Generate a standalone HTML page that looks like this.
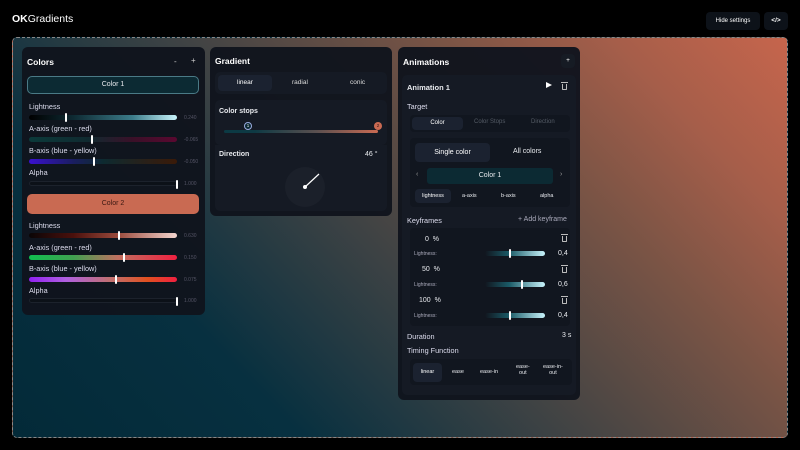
<!DOCTYPE html>
<html><head><meta charset="utf-8"><style>
*{box-sizing:border-box;margin:0;padding:0}
body{width:800px;height:450px;background:#000;font-family:"Liberation Sans",sans-serif;color:#e8eaee;position:relative;overflow:hidden;font-size:8px}
.a{position:absolute}
.stage{left:12px;top:37px;width:776px;height:401px;border:1px dashed #888;border-radius:5px;background:linear-gradient(46deg,#032a38 0%,#073040 25%,#404344 48%,#7a5445 70%,#a65e4a 85%,#c6654c 100%)}
.panel{background:rgba(16,20,29,.96);border-radius:6px}
.card{background:#151a24;border-radius:5px}
.t{font-weight:bold;font-size:8.5px;color:#fff}
.lbl{font-size:7.3px;color:#dde}
.track{height:5px;border-radius:3px}
.knob{width:2px;height:9px;background:#fff;top:-2px;border-radius:1px}
.val{font-size:5px;color:#556}
.btn{background:#1b2230;border-radius:4px;text-align:center;color:#fff;font-size:6.5px}
.trash{width:5px;height:6px;border:1px solid #bbb;border-top:none;border-radius:0 0 1px 1px}
.trash:before{content:"";position:absolute;left:-2px;top:-2px;width:7px;height:1px;background:#bbb}
</style></head><body>
<div class="a" style="left:12px;top:13px;font-size:10.5px;color:#fff"><b>OK</b>Gradients</div>
<div class="a btn" style="left:706px;top:12px;width:54px;height:18px;line-height:18px;background:#0d1219;font-size:6px">Hide settings</div>
<div class="a btn" style="left:764px;top:12px;width:24px;height:18px;line-height:18px;background:#0d1219;font-size:6.5px;font-weight:bold">&lt;/&gt;</div>
<div class="a stage"></div>

<!-- Colors -->
<div class="a panel" style="left:22px;top:47px;width:183px;height:268px">
 <div class="a t" style="left:5px;top:10px">Colors</div>
 <div class="a" style="left:152px;top:10px;color:#ccc">-</div>
 <div class="a" style="left:169px;top:9px;color:#ccc">+</div>
 <div class="a" style="left:5px;top:29px;width:172px;height:18px;border:1px solid #4a7a86;border-radius:5px;background:#0c2a33;text-align:center;line-height:16px;font-size:7px">Color 1</div>
 <div class="a lbl" style="left:7px;top:55px">Lightness</div>
 <div class="a track" style="left:7px;top:68px;width:148px;background:linear-gradient(90deg,#000,#0e2a33 30%,#3c7c8a 70%,#c8f4fc)"><div class="a knob" style="left:36px"></div></div>
 <div class="a val" style="left:162px;top:68px">0.240</div>
 <div class="a lbl" style="left:7px;top:77px">A-axis (green - red)</div>
 <div class="a track" style="left:7px;top:90px;width:148px;background:linear-gradient(90deg,#0b3a3a,#102a30 40%,#3a1028 70%,#5a0830)"><div class="a knob" style="left:62px"></div></div>
 <div class="a val" style="left:162px;top:90px">-0.065</div>
 <div class="a lbl" style="left:7px;top:99px">B-axis (blue - yellow)</div>
 <div class="a track" style="left:7px;top:112px;width:148px;background:linear-gradient(90deg,#3a10d0,#1a1e60 30%,#0d2a30 50%,#2a2018 80%,#3a1a08)"><div class="a knob" style="left:64px"></div></div>
 <div class="a val" style="left:162px;top:112px">-0.050</div>
 <div class="a lbl" style="left:7px;top:121px">Alpha</div>
 <div class="a track" style="left:7px;top:134px;width:148px;background:#0c1118;border:1px solid #1c222c"><div class="a knob" style="left:146px"></div></div>
 <div class="a val" style="left:162px;top:134px">1.000</div>
 <div class="a" style="left:5px;top:147px;width:172px;height:20px;border-radius:5px;background:#c96a52;text-align:center;line-height:20px;font-size:7px;color:#3a1812">Color 2</div>
 <div class="a lbl" style="left:7px;top:174px">Lightness</div>
 <div class="a track" style="left:7px;top:186px;width:148px;background:linear-gradient(90deg,#0a0506,#4a100c 30%,#9a4a3c 60%,#f4d6d0)"><div class="a knob" style="left:89px"></div></div>
 <div class="a val" style="left:162px;top:186px">0.630</div>
 <div class="a lbl" style="left:7px;top:196px">A-axis (green - red)</div>
 <div class="a track" style="left:7px;top:208px;width:148px;background:linear-gradient(90deg,#10c050,#40a050 30%,#c07060 60%,#f02040)"><div class="a knob" style="left:94px"></div></div>
 <div class="a val" style="left:162px;top:208px">0.150</div>
 <div class="a lbl" style="left:7px;top:217px">B-axis (blue - yellow)</div>
 <div class="a track" style="left:7px;top:230px;width:148px;background:linear-gradient(90deg,#9020f0,#b060e0 25%,#c07070 55%,#e05020 80%,#f02040)"><div class="a knob" style="left:86px"></div></div>
 <div class="a val" style="left:162px;top:230px">0.075</div>
 <div class="a lbl" style="left:7px;top:239px">Alpha</div>
 <div class="a track" style="left:7px;top:251px;width:148px;background:#0c1118;border:1px solid #1c222c"><div class="a knob" style="left:146px"></div></div>
 <div class="a val" style="left:162px;top:251px">1.000</div>
</div>

<!-- Gradient -->
<div class="a panel" style="left:210px;top:47px;width:182px;height:169px">
 <div class="a t" style="left:5px;top:9px">Gradient</div>
 <div class="a card" style="left:5px;top:25px;width:172px;height:22px">
  <div class="a btn" style="left:3px;top:3px;width:54px;height:16px;line-height:16px">linear</div>
  <div class="a" style="left:77px;top:7px;font-size:6.5px;color:#ddd">radial</div>
  <div class="a" style="left:135px;top:7px;font-size:6.5px;color:#ddd">conic</div>
 </div>
 <div class="a card" style="left:5px;top:53px;width:172px;height:45px">
  <div class="a" style="left:4px;top:8px;font-size:7px;font-weight:bold">Color stops</div>
  <div class="a" style="left:9px;top:30px;width:154px;height:3px;border-radius:2px;background:linear-gradient(90deg,#0b3a44,#0e3a44 20%,#5a5050 60%,#c96a52)"></div>
  <div class="a" style="left:29px;top:22px;width:8px;height:8px;border-radius:50%;border:1px solid #9ad;background:#0c2a33;font-size:4.5px;text-align:center;line-height:6px">1</div>
  <div class="a" style="left:159px;top:22px;width:8px;height:8px;border-radius:50%;background:#c96a52;font-size:4.5px;text-align:center;line-height:8px;color:#311">2</div>
 </div>
 <div class="a card" style="left:5px;top:98px;width:172px;height:66px;border-radius:0 0 5px 5px">
  <div class="a" style="left:4px;top:6px;font-size:7px;font-weight:bold">Direction</div>
  <div class="a" style="left:150px;top:6px;font-size:7px">46 °</div>
  <div class="a" style="left:70px;top:22px;width:40px;height:40px;border-radius:50%;background:#1b202a"></div>
  <svg class="a" style="left:70px;top:22px" width="40" height="40"><line x1="20" y1="20" x2="34" y2="7" stroke="#fff" stroke-width="1.2"/><circle cx="20" cy="20" r="2" fill="#fff"/></svg>
 </div>
</div>

<!-- Animations -->
<div class="a panel" style="left:398px;top:47px;width:182px;height:353px">
 <div class="a t" style="left:5px;top:10px">Animations</div>
 <div class="a btn" style="left:163px;top:7px;width:14px;height:14px;line-height:14px;background:#161b24">+</div>
 <div class="a card" style="left:4px;top:28px;width:174px;height:320px">
  <div class="a" style="left:5px;top:8px;font-size:7.5px;font-weight:bold">Animation 1</div>
  <div class="a" style="left:144px;top:7px;width:0;height:0;border-left:6px solid #fff;border-top:3.5px solid transparent;border-bottom:3.5px solid transparent"></div>
  <div class="a trash" style="left:160px;top:9px"></div>
  <div class="a lbl" style="left:5px;top:27px">Target</div>
  <div class="a" style="left:8px;top:40px;width:160px;height:17px;background:#11161f;border-radius:4px">
   <div class="a btn" style="left:2px;top:2px;width:51px;height:13px;line-height:13px;font-size:6px">Color</div>
   <div class="a" style="left:64px;top:4px;font-size:6px;color:#555c66">Color Stops</div>
   <div class="a" style="left:121px;top:4px;font-size:6px;color:#555c66">Direction</div>
  </div>
  <div class="a" style="left:8px;top:63px;width:160px;height:69px;background:#11161f;border-radius:4px">
   <div class="a btn" style="left:5px;top:5px;width:75px;height:19px;line-height:19px;font-size:7px">Single color</div>
   <div class="a" style="left:103px;top:10px;font-size:7px">All colors</div>
   <div class="a" style="left:6px;top:33px;color:#999;font-size:7px">‹</div>
   <div class="a" style="left:17px;top:30px;width:126px;height:16px;background:#0c2a33;border-radius:3px;text-align:center;line-height:16px;font-size:7px">Color 1</div>
   <div class="a" style="left:150px;top:33px;color:#999;font-size:7px">›</div>
   <div class="a btn" style="left:5px;top:51px;width:36px;height:14px;line-height:14px;font-size:5.5px">lightness</div>
   <div class="a" style="left:52px;top:55px;font-size:5.5px">a-axis</div>
   <div class="a" style="left:91px;top:55px;font-size:5.5px">b-axis</div>
   <div class="a" style="left:130px;top:55px;font-size:5.5px">alpha</div>
  </div>
  <div class="a lbl" style="left:5px;top:141px">Keyframes</div>
  <div class="a" style="left:116px;top:141px;font-size:7px;color:#aab">+ Add keyframe</div>
  <div class="a" style="left:8px;top:153px;width:160px;height:98px;background:#11161f;border-radius:4px">
   <div class="a" style="left:15px;top:8px;font-size:7px">0 &nbsp;%</div>
   <div class="a" style="left:4px;top:23px;font-size:5px;color:#aab">Lightness:</div>
   <div class="a trash" style="left:152px;top:8px"></div>
   <div class="a track" style="left:75px;top:23px;width:60px;background:linear-gradient(90deg,#11161f,#1a5a66 40%,#c8f4fc)"><div class="a knob" style="left:24px"></div></div>
   <div class="a" style="left:148px;top:22px;font-size:7px">0,4</div>
   <div class="a" style="left:12px;top:38px;font-size:7px">50 &nbsp;%</div>
   <div class="a" style="left:4px;top:54px;font-size:5px;color:#aab">Lightness:</div>
   <div class="a trash" style="left:152px;top:39px"></div>
   <div class="a track" style="left:75px;top:54px;width:60px;background:linear-gradient(90deg,#11161f,#1a5a66 40%,#c8f4fc)"><div class="a knob" style="left:36px"></div></div>
   <div class="a" style="left:148px;top:53px;font-size:7px">0,6</div>
   <div class="a" style="left:9px;top:69px;font-size:7px">100 &nbsp;%</div>
   <div class="a" style="left:4px;top:85px;font-size:5px;color:#aab">Lightness:</div>
   <div class="a trash" style="left:152px;top:70px"></div>
   <div class="a track" style="left:75px;top:85px;width:60px;background:linear-gradient(90deg,#11161f,#1a5a66 40%,#c8f4fc)"><div class="a knob" style="left:24px"></div></div>
   <div class="a" style="left:148px;top:84px;font-size:7px">0,4</div>
  </div>
  <div class="a lbl" style="left:5px;top:257px">Duration</div>
  <div class="a" style="left:160px;top:257px;font-size:7px">3 s</div>
  <div class="a lbl" style="left:5px;top:271px">Timing Function</div>
  <div class="a" style="left:8px;top:284px;width:162px;height:26px;background:#11161f;border-radius:4px;font-size:5.5px">
   <div class="a btn" style="left:3px;top:4px;width:29px;height:19px;line-height:19px;font-size:5.5px">linear</div>
   <div class="a" style="left:42px;top:10px">ease</div>
   <div class="a" style="left:70px;top:10px">ease-in</div>
   <div class="a" style="left:106px;top:5px;text-align:center">ease-<br>out</div>
   <div class="a" style="left:133px;top:5px;text-align:center">ease-in-<br>out</div>
  </div>
 </div>
</div>
</body></html>
